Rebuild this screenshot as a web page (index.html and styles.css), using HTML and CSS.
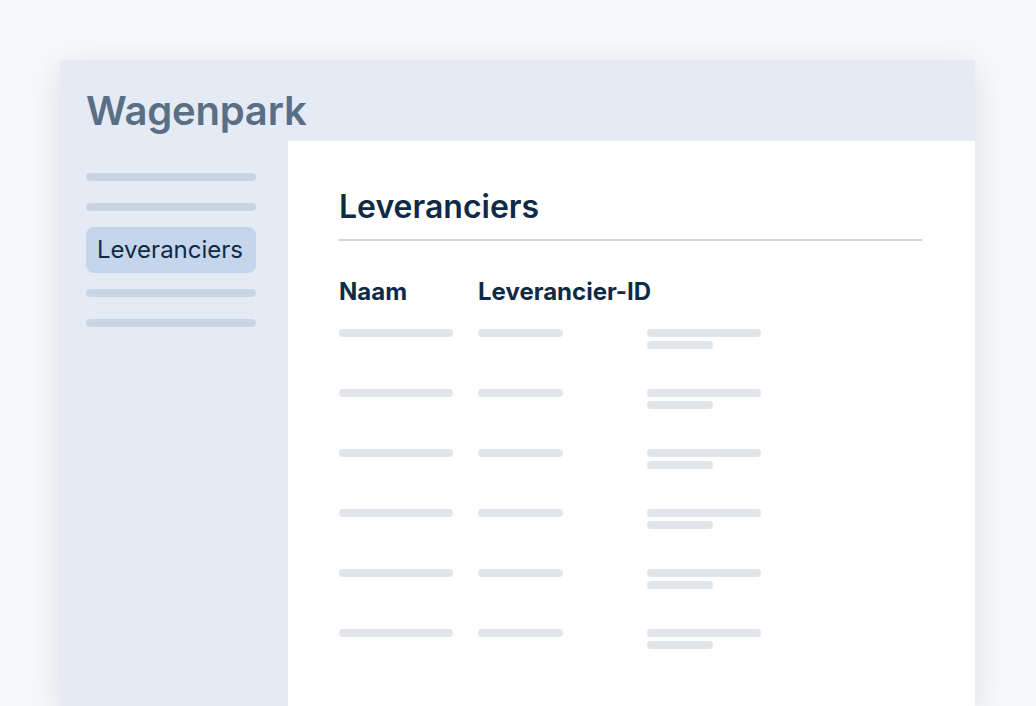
FILE: index.html
```html
<!DOCTYPE html>
<html lang="nl">
<head>
    <meta charset="UTF-8">
    <title>Wagenpark</title>
    <link rel="stylesheet" href="styles.css">
</head>
<body>
    <div class="window">
        <!-- Top bar -->
        <div class="topbar">
            <div class="app-title">Wagenpark</div>
        </div>

        <div class="window-body">
            <!-- Sidebar -->
            <div class="sidebar">
                <div class="nav-bar"></div>
                <div class="nav-bar"></div>
                <div class="nav-item active">Leveranciers</div>
                <div class="nav-bar"></div>
                <div class="nav-bar"></div>
            </div>

            <!-- Main content -->
            <div class="main">
                <h1 class="page-title">Leveranciers</h1>
                <div class="table">
                    <div class="table-head">
                        <div class="col col-name">Naam</div>
                        <div class="col col-id">Leverancier-ID</div>
                        <div class="col col-info"></div>
                    </div>
                    <div class="table-row">
                        <div class="col col-name"><span class="line wide"></span></div>
                        <div class="col col-id"><span class="line mid"></span></div>
                        <div class="col col-info"><span class="line wide"></span><span class="line short"></span></div>
                    </div>
                    <div class="table-row">
                        <div class="col col-name"><span class="line wide"></span></div>
                        <div class="col col-id"><span class="line mid"></span></div>
                        <div class="col col-info"><span class="line wide"></span><span class="line short"></span></div>
                    </div>
                    <div class="table-row">
                        <div class="col col-name"><span class="line wide"></span></div>
                        <div class="col col-id"><span class="line mid"></span></div>
                        <div class="col col-info"><span class="line wide"></span><span class="line short"></span></div>
                    </div>
                    <div class="table-row">
                        <div class="col col-name"><span class="line wide"></span></div>
                        <div class="col col-id"><span class="line mid"></span></div>
                        <div class="col col-info"><span class="line wide"></span><span class="line short"></span></div>
                    </div>
                    <div class="table-row">
                        <div class="col col-name"><span class="line wide"></span></div>
                        <div class="col col-id"><span class="line mid"></span></div>
                        <div class="col col-info"><span class="line wide"></span><span class="line short"></span></div>
                    </div>
                    <div class="table-row">
                        <div class="col col-name"><span class="line wide"></span></div>
                        <div class="col col-id"><span class="line mid"></span></div>
                        <div class="col col-info"><span class="line wide"></span><span class="line short"></span></div>
                    </div>
                </div>
            </div>
        </div>
    </div>
</body>
</html>
```

FILE: styles.css
```css
/* Reset */
* {
    margin: 0;
    padding: 0;
    box-sizing: border-box;
    font-family: 'Inter', 'Liberation Sans', sans-serif;
}

html, body {
    height: 100%;
    overflow: hidden;
}

body {
    background-color: #f7f8fa;
    padding: 60px 0 0 60px;
}

/* Window */
.window {
    width: 915px;
    height: 646px;
    background-color: #e4ebf5;
    box-shadow: 0 8px 30px rgba(30, 45, 70, 0.12);
    display: flex;
    flex-direction: column;
}

.topbar {
    height: 81px;
    padding: 27px 0 0 26px;
}

.app-title {
    font-size: 40px;
    font-weight: 600;
    line-height: 48px;
    color: #5a6e85;
    letter-spacing: -0.2px;
}

.window-body {
    flex: 1;
    display: flex;
}

/* Sidebar */
.sidebar {
    width: 228px;
    padding: 32px 32px 0 26px;
    display: flex;
    flex-direction: column;
    gap: 22px;
}

.nav-bar {
    height: 8px;
    border-radius: 4px;
    background-color: #c9d5e5;
}

.nav-item {
    height: 46px;
    margin: -6px 0;
    padding: 0 11px;
    border-radius: 8px;
    font-size: 24px;
    line-height: 46px;
    color: #0f2a45;
}

.nav-item.active {
    background-color: #c4d5ec;
}

/* Main */
.main {
    flex: 1;
    background-color: #fff;
    padding: 46px 53px 0 51px;
}

.page-title {
    font-size: 32px;
    font-weight: 600;
    line-height: 40px;
    color: #0f2a45;
    padding-bottom: 12px;
    border-bottom: 2px solid #d3d6db;
}

.table {
    margin-top: 36px;
}

.table-head {
    display: flex;
    font-size: 24px;
    font-weight: 700;
    line-height: 30px;
    color: #0f2a45;
    margin-bottom: 22px;
}

.table-row {
    display: flex;
    height: 60px;
}

.col-name {
    width: 139px;
}

.col-id {
    width: 169px;
    white-space: nowrap;
}

.col-info {
    display: flex;
    flex-direction: column;
    gap: 4px;
}

.line {
    display: block;
    height: 8px;
    border-radius: 4px;
    background-color: #e2e5e9;
}

.line.wide {
    width: 114px;
}

.line.mid {
    width: 85px;
}

.line.short {
    width: 66px;
}
```
